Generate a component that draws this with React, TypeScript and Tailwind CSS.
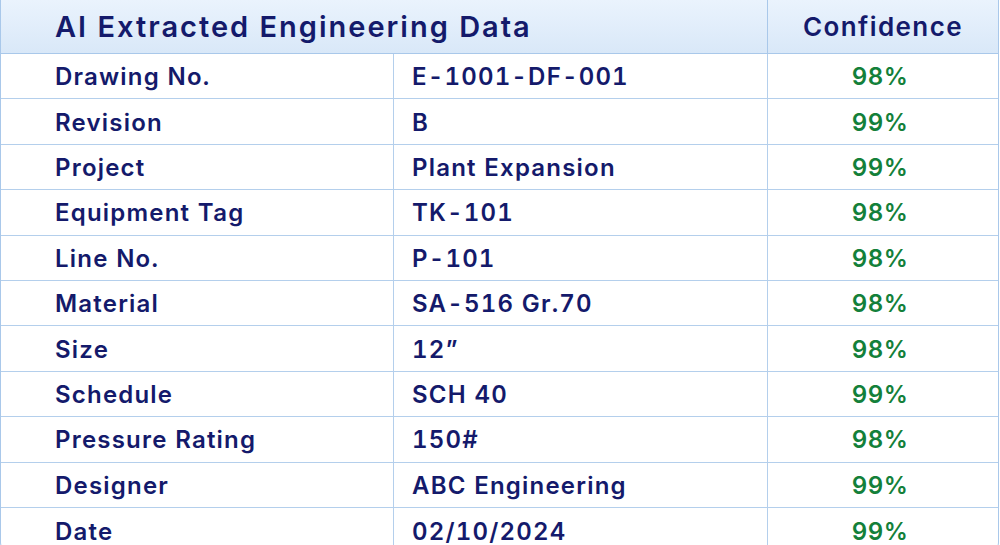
const rows = [
  { field: 'Drawing No.', value: 'E-1001-DF-001', confidence: '98%' },
  { field: 'Revision', value: 'B', confidence: '99%' },
  { field: 'Project', value: 'Plant Expansion', confidence: '99%' },
  { field: 'Equipment Tag', value: 'TK-101', confidence: '98%' },
  { field: 'Line No.', value: 'P-101', confidence: '98%' },
  { field: 'Material', value: 'SA-516 Gr.70', confidence: '98%' },
  { field: 'Size', value: '12\u201D', confidence: '98%' },
  { field: 'Schedule', value: 'SCH 40', confidence: '99%' },
  { field: 'Pressure Rating', value: '150#', confidence: '98%' },
  { field: 'Designer', value: 'ABC Engineering', confidence: '99%' },
  { field: 'Date', value: '02/10/2024', confidence: '99%' },
];

export default function App() {
  return (
    <div className="w-[1000px] h-[545px] overflow-hidden bg-white font-['Inter','Liberation_Sans',sans-serif] text-[#141a6b]">
      <div className="w-[999px] border-x border-b border-[#a9c8ea] rounded-b-[12px] overflow-hidden">
        {/* header */}
        <div className="grid grid-cols-[767px_1fr] h-[54px] bg-gradient-to-b from-[#eaf3fd] to-[#d9e8f8] border-b border-[#a9c8ea]">
          <div className="flex items-center pl-[54px] border-r border-[#a9c8ea] text-[29px] font-semibold tracking-[2px]">
            AI Extracted Engineering Data
          </div>
          <div className="flex items-center justify-center text-[26px] font-semibold tracking-[1.4px]">
            Confidence
          </div>
        </div>

        {/* body */}
        {rows.map((row, i) => (
          <div
            key={row.field}
            className={`grid grid-cols-[393px_374px_1fr] h-[45.4px] text-[24px] font-semibold tracking-[1.2px] tabular-nums ${i < rows.length - 1 ? 'border-b border-[#b4cfec]' : ''}`}
          >
            <div className="flex items-center pl-[54px] pt-[2px] border-r border-[#b4cfec]">
              {row.field}
            </div>
            <div className="flex items-center pl-[18px] pt-[2px] border-r border-[#b4cfec]">
              {row.value}
            </div>
            <div className="flex items-center justify-center pt-[2px] pr-[6px] text-[#13803a] tracking-[0.5px]">
              {row.confidence}
            </div>
          </div>
        ))}
      </div>
    </div>
  );
}
